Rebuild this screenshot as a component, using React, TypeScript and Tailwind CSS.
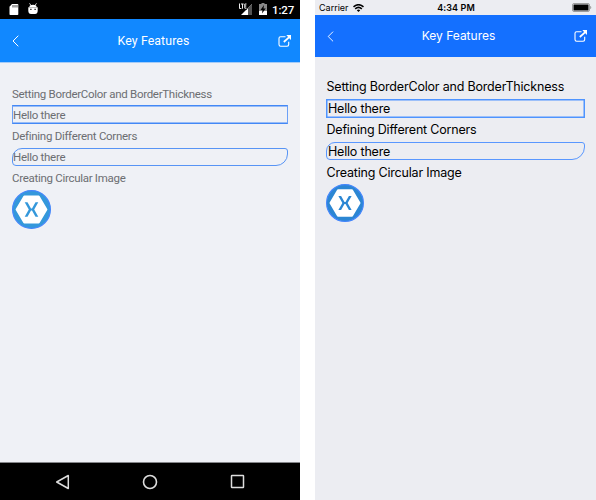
import React from "react";

function BackIcon({ className }: { className: string }) {
  return (
    <svg className={className} viewBox="0 0 7 12" fill="none" stroke="white" strokeWidth="1">
      <path d="M6.300.700 1 6l5.300 5.300" />
    </svg>
  );
}

function ShareIcon() {
  return (
    <svg className="h-3 w-[14px]" viewBox="0 0 14 12" fill="none" stroke="white">
      <path d="M7.500 1.700H2.600Q1 1.700 1 3.300v6.200Q1 11.200 2.600 11.200h6.500q1.600 0 1.600-1.700V6.800" strokeWidth="1.100" />
      <path d="M5.800 7 11.500 1.900" strokeWidth="1.700" />
      <path d="M8.300 0H13v4.900L11.500 3.400 9.900 1.700Z" fill="white" stroke="none" />
    </svg>
  );
}

function Logo({ className, fill }: { className: string; fill: string }) {
  return (
    <svg className={className} viewBox="0 0 39 39">
      <circle cx="19.500" cy="19.500" r="18.900" fill={fill} stroke="#4486fb" strokeWidth="1.200" />
      <path d="M12.300 6.500h14.400L34.400 19.500 26.700 32.500H12.300L4.600 19.500Z" fill="white" stroke="white" strokeWidth="2" strokeLinejoin="round" />
      <path d="M12.700 12.300h2.800l3.500 6.200h1l3.500-6.200h2.800L22.200 19.500l4.100 7.200h-2.800l-3.500-6.200h-1l-3.500 6.200h-2.800l4.100-7.200Z" fill={fill} />
    </svg>
  );
}

function AndroidPhone() {
  return (
    <section className="flex h-[500px] w-[300px] flex-col bg-[#eff1f6] font-['Roboto',sans-serif]">
      <div className="flex h-[19px] items-start bg-black pt-[3px] pl-[9px]">
        <svg className="mt-px h-[11px] w-[10px]" viewBox="0 0 10 11">
          <path d="M3 0h5.500q.8 0 .8.800v9.400q0 .8-.8.800H1.300q-.8 0-.8-.8V2.800Z" fill="white" />
          <path d="M4 1v2.500M6 1v2.500M8 1v2.500" stroke="#333" strokeWidth=".9" />
        </svg>
        <svg className="ml-[9px] h-3 w-[10px]" viewBox="0 0 10 12">
          <path d="M1.300 4Q1.500 1.700 5 1.700T8.700 4Z" fill="white" />
          <path d="M1.500.300 2.900 2.300M8.500.300 7.100 2.300" stroke="white" strokeWidth=".8" />
          <path d="M.3 4.300h9.400V8Q9.500 11 7 11H3Q.5 11 .3 8Z" fill="white" />
          <path d="M2.300 6.300h1.200M6.500 6.300h1.200" stroke="black" strokeWidth="1.200" />
        </svg>
        <svg className="ml-[200px] h-3 w-[16px]" viewBox="0 0 16 12">
          <path d="M3 12 14 1v11Z" fill="white" />
          <path d="M10 5 14 1v11h-4Z" fill="#555" />
          <path d="M0 0h9v6.500H0Z" fill="black" />
          <path d="M1.500.500v5h1.800M3 1h2.600M4.500 1v4.700M8.500 1H6.800v4.200h1.700M6.800 3h1.500" fill="none" stroke="#eee" strokeWidth="1" />
        </svg>
        <svg className="ml-[5px] h-3 w-2" viewBox="0 0 8 12">
          <path d="M2.500 1V0h3v1H8v11H0V1Z" fill="#888" />
          <path d="M0 8h8v4H0Z" fill="white" />
          <path d="M5 2 1.500 7h2L3 10.500 6.700 5.500H4.500Z" fill="black" />
        </svg>
        <span className="ml-[5px] text-[11.500px] leading-[15px] font-medium tracking-[-.1px] text-white">1:27</span>
      </div>
      <header className="flex h-11 items-center border-b border-[#a5ccf8] bg-[#1188ff] pr-2 pl-3 text-white">
        <BackIcon className="h-3 w-[7px]" />
        <h1 className="flex-1 pt-[2px] pl-[10px] text-center text-[12.300px] tracking-[.12px]">Key Features</h1>
        <ShareIcon />
      </header>
      <main className="flex flex-1 flex-col items-start px-3 pt-[21px] text-[11.500px] tracking-[-.29px] text-[#6c6e72]">
        <p className="h-[21px] whitespace-nowrap leading-[21px]">Setting BorderColor and BorderThickness</p>
        <div className="h-[19px] w-full border border-x-[#6ba0f7] border-y-[#4388f6] leading-[19px] shadow-[inset_0_.6px_0_#4388f6,inset_0_-.6px_0_#4388f6]">Hello there</div>
        <p className="mt-[3px] h-[20px] leading-[18px]">Defining Different Corners</p>
        <div className="mt-px h-[18px] w-full rounded-tl-[10px] rounded-tr-[3px] rounded-br-[12px] rounded-bl-[4px] border border-[#5794f5] leading-[17px]">Hello there</div>
        <p className="mt-[3px] h-5 leading-[18px]">Creating Circular Image</p>
        <Logo className="mt-px size-[39px]" fill="#3498db" />
      </main>
      <nav className="flex h-[38px] items-center justify-between border-t border-[#85868a] bg-black pr-[55px] pl-[55px]">
        <svg className="size-4" viewBox="0 0 16 16" fill="none" stroke="#ddd" strokeWidth="1.500"><path d="M13.300 1.500v13L1.700 8Z" strokeLinejoin="round" /></svg>
        <svg className="size-4" viewBox="0 0 16 16" fill="none" stroke="#ddd" strokeWidth="1.600"><circle cx="8" cy="8" r="6.500" /></svg>
        <svg className="size-4" viewBox="0 0 16 16" fill="none" stroke="#ddd" strokeWidth="1.500"><rect x="2.500" y="1.500" width="12" height="12" rx=".5" /></svg>
      </nav>
    </section>
  );
}

function IosPhone() {
  return (
    <section className="flex h-[500px] w-[281px] flex-col bg-[#ecedf2] font-['Inter',sans-serif]">
      <div className="grid h-[15px] grid-cols-3 items-center text-[9px] leading-[15px] text-black">
        <span className="flex items-center gap-1 pl-[4px]">
          Carrier
          <svg className="h-2 w-[11px]" viewBox="0 0 11 8">
            <path d="M.5 2.800Q5.500-1.300 10.500 2.800M2.200 4.800q3.300-2.700 6.600 0" fill="none" stroke="black" strokeWidth="1.600" />
            <path d="M3.800 6.200q1.700-1.300 3.400 0L5.500 8Z" />
          </svg>
        </span>
        <span className="pl-px text-center font-semibold tracking-[.1px]">4:34 PM</span>
        <svg className="mr-[4px] h-[9px] w-5 justify-self-end" viewBox="0 0 20 9">
          <rect x=".5" y=".5" width="17" height="8" rx="1.500" fill="none" stroke="#888" strokeWidth=".8" />
          <rect x="1.500" y="1.500" width="15" height="6" rx=".5" />
          <path d="M18.500 3.200q1 1.300 0 2.600Z" fill="#777" stroke="#999" strokeWidth=".5" />
        </svg>
      </div>
      <header className="flex h-[42px] items-center bg-[#1470ff] pr-[8px] pl-[12px] text-white">
        <BackIcon className="h-[11px] w-[7px]" />
        <h1 className="flex-1 pl-[9px] text-center text-[12px] tracking-[0px]">Key Features</h1>
        <ShareIcon />
      </header>
      <main className="flex flex-1 flex-col items-start px-[11px] pt-[20px] text-[12.500px] tracking-[-.19px] text-black">
        <p className="h-[21px] pl-[.5px] whitespace-nowrap leading-[20px]">Setting BorderColor and BorderThickness</p>
        <div className="mt-px h-[19px] w-full border border-[#4e94ff] pl-px leading-[18px] shadow-[inset_0_0_0_.5px_#4e94ff]">Hello there</div>
        <p className="mt-[2px] h-[20px] pl-[.5px] leading-[20px]">Defining Different Corners</p>
        <div className="mt-[2px] h-[18px] w-full rounded-tl-[9px] rounded-tr-[3px] rounded-br-[13px] rounded-bl-[4px] border border-[#5997ff] pl-px leading-[17px]">Hello there</div>
        <p className="mt-[3px] h-[20px] pl-[.5px] leading-[20px]">Creating Circular Image</p>
        <Logo className="mt-px size-[38px]" fill="#2b86d3" />
      </main>
    </section>
  );
}

export default function App() {
  return (
    <div className="flex h-[500px] w-[596px] justify-between overflow-hidden bg-white">
      <AndroidPhone />
      <IosPhone />
    </div>
  );
}
